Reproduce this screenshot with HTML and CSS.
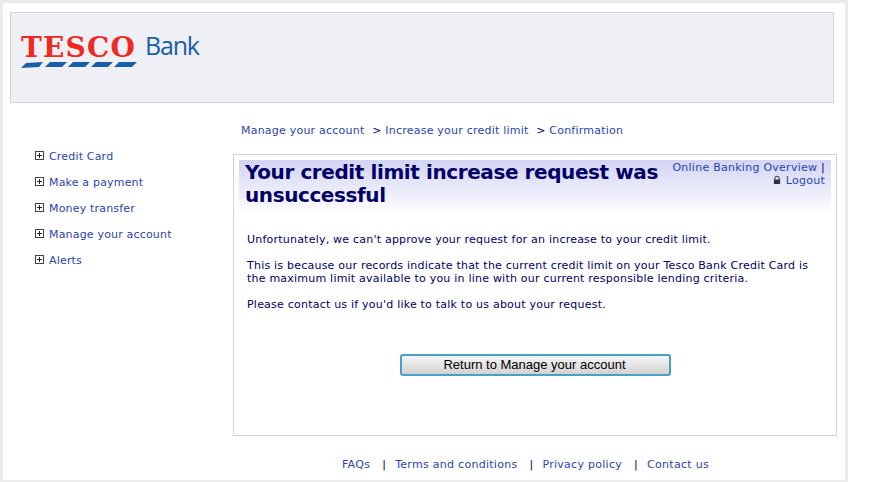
FILE: index.html
```html
<!DOCTYPE html>
<html lang="en">
<head>
  <meta charset="UTF-8">
  <title>Tesco Bank</title>
  <link rel="stylesheet" href="styles.css">
</head>
<body>
  <div class="page">
    <div class="header">
      <div class="logo">
        <div class="logo-tesco">
          <span class="logo-word">TESCO</span>
          <svg class="logo-stripes" width="116" height="6" viewBox="0 0 116 6">
            <polygon points="0,6 5,1 22,0 18,5"/>
            <polygon points="24,5 29,0 46,0 41,5"/>
            <polygon points="47,5 52,0 69,0 64,5"/>
            <polygon points="70,5 75,0 92,0 87,5"/>
            <polygon points="93,5 98,0 116,0 111,5"/>
          </svg>
        </div>
        <span class="logo-bank">Bank</span>
      </div>
    </div>

    <div class="content">
      <ul class="side-nav">
        <li><span class="plus"></span><a href="#">Credit Card</a></li>
        <li><span class="plus"></span><a href="#">Make a payment</a></li>
        <li><span class="plus"></span><a href="#">Money transfer</a></li>
        <li><span class="plus"></span><a href="#">Manage your account</a></li>
        <li><span class="plus"></span><a href="#">Alerts</a></li>
      </ul>

      <div class="main">
        <div class="crumbs">
          <a href="#">Manage your account</a>
          <span class="crumb">&gt; <a href="#">Increase your credit limit</a></span>
          <span class="crumb">&gt; <a href="#">Confirmation</a></span>
        </div>

        <div class="box">
          <div class="title-band">
            <h1>Your credit limit increase request was unsuccessful</h1>
            <div class="top-links">
              <a href="#">Online Banking Overview</a> |<br>
              <svg class="lock" width="8" height="10" viewBox="0 0 9 10">
                <path d="M2 5V3.2a2.5 2.5 0 0 1 5 0V5" fill="none" stroke="#444" stroke-width="1.2"/>
                <rect x="1" y="4.5" width="7" height="5" fill="#333"/>
              </svg>
              <a href="#">Logout</a>
            </div>
          </div>

          <div class="message">
            <p>Unfortunately, we can't approve your request for an increase to your credit limit.</p>
            <p>This is because our records indicate that the current credit limit on your Tesco Bank Credit Card is the maximum limit available to you in line with our current responsible lending criteria.</p>
            <p>Please contact us if you'd like to talk to us about your request.</p>
          </div>

          <div class="actions">
            <button type="button">Return to Manage your account</button>
          </div>
        </div>

        <div class="footer">
          <a href="#">FAQs</a>
          <span class="sep">|</span>
          <a href="#">Terms and conditions</a>
          <span class="sep">|</span>
          <a href="#">Privacy policy</a>
          <span class="sep">|</span>
          <a href="#">Contact us</a>
        </div>
      </div>
    </div>
  </div>
</body>
</html>
```

FILE: styles.css
```css
* { box-sizing: border-box; margin: 0; padding: 0 }
html, body { height: 100%; overflow: hidden }
body {
  background: #fff;
  color: #000066;
  font-family: 'DejaVu Sans', Verdana, sans-serif;
  font-size: 11px;
  line-height: 13px;
  letter-spacing: .18px;
}
a { color: #2a44b0; text-decoration: none }

.page {
  width: 848px; height: 482px;
  border: solid #ececec;
  border-width: 3px 3px 2px 3px;
  padding: 9px 8px 0 7px;
}

.header {
  width: 824px; height: 91px;
  background: #eef0f6;
  border: 1px solid #d4d4d8;
  padding: 20px 0 0 10px;
}
.logo { display: flex; align-items: flex-start }
.logo-tesco { width: 116px; display: flex; flex-direction: column }
.logo-word {
  font-family: 'DejaVu Serif', serif;
  font-weight: bold;
  font-size: 28px;
  line-height: 29px;
  letter-spacing: 1.2px;
  color: #ee2a24;
}
.logo-stripes { fill: #1a5ea8; display: block }
.logo-bank {
  font-family: 'Open Sans', sans-serif;
  font-weight: 500;
  font-size: 25px;
  line-height: 25px;
  color: #1a5ea8;
  margin-left: 8px;
  letter-spacing: -1.2px;
}

.content { display: flex; padding-top: 20px }

.side-nav {
  list-style: none;
  width: 223px;
  padding: 20px 0 0 25px;
}
.side-nav li {
  display: flex; align-items: center;
  height: 26px;
}
.plus {
  width: 9px; height: 9px;
  border: 1px solid #444;
  margin: -2px 5px 0 0;
  background:
    linear-gradient(#222, #222) center / 5px 1px no-repeat,
    linear-gradient(#222, #222) center / 1px 5px no-repeat,
    #fff;
}

.main { width: 604px }
.crumbs { padding-left: 8px; height: 31px; padding-top: 1px; letter-spacing: .22px }
.crumb { margin-left: 4px }

.box {
  height: 282px;
  border: 1px solid #d4d4d4;
  padding: 5px;
}
.title-band {
  display: flex; justify-content: space-between;
  height: 55px;
  width: 592px;
  background: linear-gradient(#d2d4f4, #fff);
  padding: 0 6px;
}
h1 {
  font-size: 20px;
  line-height: 23px;
  letter-spacing: -.41px;
  width: 425px;
  padding-top: 1px;
  color: #000066;
}
.top-links { text-align: right; padding-top: 1px; letter-spacing: .26px }
.lock { vertical-align: -1px; margin-right: 1px }

.message { padding: 18px 8px 0 8px; letter-spacing: .22px }
.message p { margin-bottom: 13px; line-height: 13px }

.actions { display: flex; padding: 30px 0 0 161px }
button {
  width: 271px; height: 22px;
  font-family: 'Liberation Sans', Arial, sans-serif;
  font-size: 13px;
  letter-spacing: 0;
  color: #000;
  background: linear-gradient(#f6f6f6, #d2d2d2);
  border: 2px solid #4a9fc4;
  border-radius: 3px;
  padding: 0 2px 2px 0;
}

.footer {
  display: flex; gap: 9px;
  padding: 22px 0 0 109px;
  letter-spacing: .28px;
}
.sep { margin-left: 3px }
```
